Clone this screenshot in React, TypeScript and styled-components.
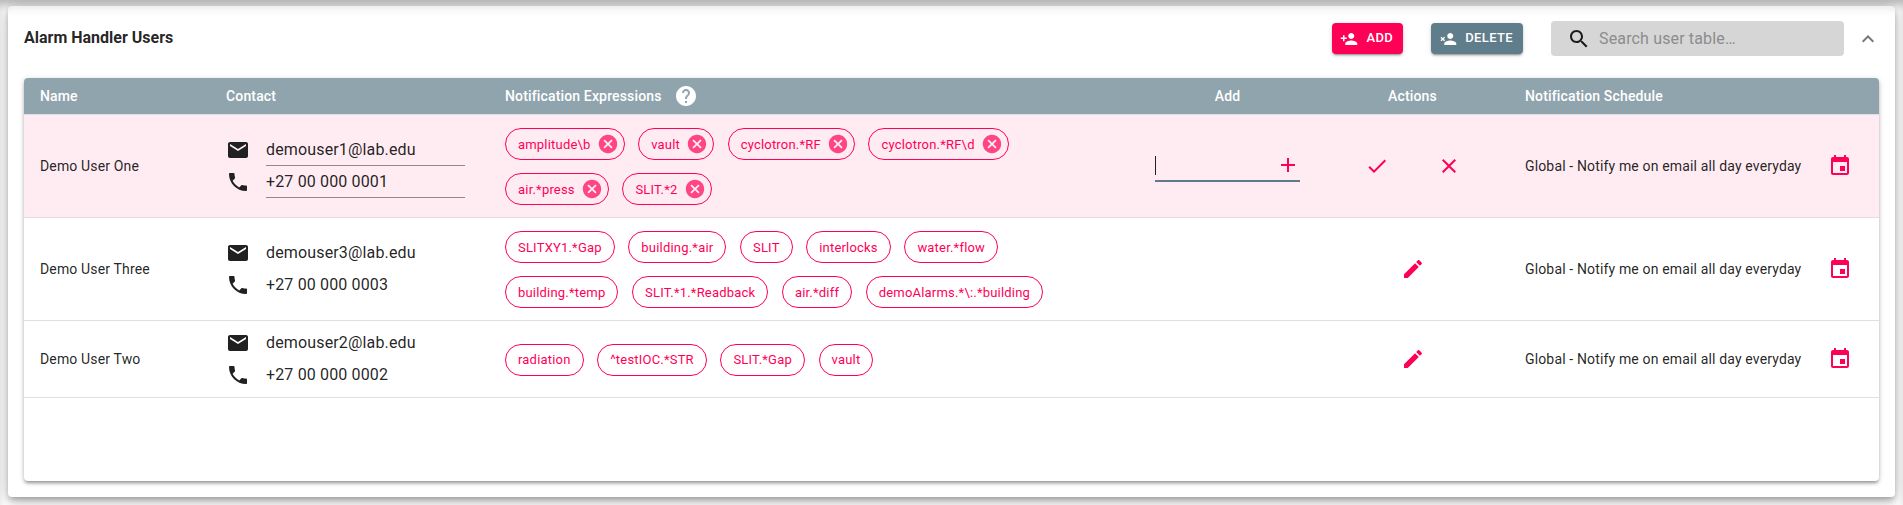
import React from "react";
import styled, { createGlobalStyle } from "styled-components";

const PRIMARY = "#ff0057";

const Global = createGlobalStyle`
  html, body { margin: 0; height: 505px; overflow: hidden; background: #fff; }
  body {
    padding: 6px 8px 8px;
    box-sizing: border-box;
    font-family: Roboto, "Liberation Sans", sans-serif;
    box-shadow: inset 0 8px 8px -3px rgba(0,0,0,.28);
  }
`;

const Paper = styled.section`
  height: 491px;
  box-sizing: border-box;
  background: #fff;
  border-radius: 4px;
  padding: 15px 3px 16px 16px;
  box-shadow: 0 3px 5px -1px rgba(0,0,0,.2), 0 6px 10px 0 rgba(0,0,0,.14), 0 1px 18px 0 rgba(0,0,0,.2),
    inset 0 12px 10px -10px rgba(0,0,0,.1);
`;

const Toolbar = styled.header`
  display: flex;
  align-items: center;
  height: 35px;
  margin-bottom: 22px;
`;

const Title = styled.h1`
  flex: 1;
  margin: 0 0 2px;
  font-size: 16px;
  font-weight: 700;
  color: rgba(0,0,0,.87);
`;

const ActionButton = styled.button<{ $tone: string }>`
  display: inline-flex;
  align-items: center;
  border: 0;
  border-radius: 4px;
  padding: 4px 10px;
  margin-right: 28px;
  background: ${(p) => p.$tone};
  color: #fff;
  font: 500 13px/1.75 Roboto, sans-serif;
  letter-spacing: 0.02857em;
  text-transform: uppercase;
  box-shadow: 0 3px 1px -2px rgba(0,0,0,.2), 0 2px 2px 0 rgba(0,0,0,.14), 0 1px 5px 0 rgba(0,0,0,.12);
  svg { width: 18px; height: 18px; margin: 0 8px 0 -2px; fill: currentColor; }
`;

const SearchBox = styled.div`
  display: flex;
  align-items: center;
  width: 293px;
  height: 35px;
  box-sizing: border-box;
  padding-left: 16px;
  background: #d6d6d6;
  border-radius: 4px;
  svg { width: 24px; height: 24px; fill: rgba(0,0,0,.87); margin-right: 8px; }
`;

const SearchInput = styled.input`
  flex: 1;
  min-width: 0;
  border: 0;
  outline: 0;
  background: none;
  padding: 0;
  font: 400 16px Roboto, sans-serif;
  letter-spacing: 0.00938em;
  &::placeholder { color: #8c8c8c; opacity: 1; }
`;

const Collapse = styled.button`
  width: 48px;
  height: 48px;
  border: 0;
  padding: 12px;
  background: none;
  svg { display: block; width: 24px; height: 24px; fill: rgba(0,0,0,.54); }
`;

const Table = styled.div`
  height: 403px;
  width: 1855px;
  border-radius: 4px;
  overflow: hidden;
  background: #fff;
  box-shadow: 0 3px 3px -1px rgba(0,0,0,.25), 0 2px 4px 0 rgba(0,0,0,.14), 0 1px 6px 0 rgba(0,0,0,.12);
`;

const columns = "186px 279px 650px 177px 193px 370px";

const HeadRow = styled.div`
  display: grid;
  grid-template-columns: ${columns};
  height: 36px;
  align-items: center;
  background: #90a4ae;
  border-bottom: 1px solid #e0e0e0;
  color: #fff;
  font-size: 14px;
  font-weight: 500;
  letter-spacing: 0.01071em;
`;

const HeadCell = styled.div<{ $center?: boolean }>`
  display: flex;
  align-items: center;
  padding: 0 16px;
  justify-content: ${(p) => (p.$center ? "center" : "flex-start")};
  svg { width: 24px; height: 24px; fill: #fff; margin-left: 12px; }
`;

const Row = styled.div<{ $editing?: boolean }>`
  display: grid;
  grid-template-columns: ${columns};
  align-items: center;
  border-bottom: 1px solid #e0e0e0;
  background: ${(p) => (p.$editing ? "#ffebf2" : "#fff")};
  color: rgba(0,0,0,.87);
  font-size: 14px;
  letter-spacing: 0.01071em;
`;

const Cell = styled.div`
  padding: 0 16px;
`;

const ContactCell = styled.div`
  padding: 6px 16px;
`;

const ContactLine = styled.div`
  display: flex;
  align-items: center;
  height: 32px;
  svg { flex: none; width: 24px; height: 24px; fill: #212121; margin-right: 16px; }
`;

const ContactText = styled.div<{ $editing?: boolean }>`
  width: 199px;
  height: 32px;
  box-sizing: border-box;
  line-height: 31px;
  font-size: 16px;
  letter-spacing: 0.00938em;
  border-bottom: 1px solid ${(p) => (p.$editing ? "rgba(0,0,0,.42)" : "transparent")};
`;

const ChipCell = styled.div`
  display: flex;
  flex-wrap: wrap;
  gap: 13px 13.6px;
  padding: 13px 20px 12px 16px;
`;

const Chip = styled.span`
  display: inline-flex;
  align-items: center;
  height: 32px;
  box-sizing: border-box;
  border: 1px solid ${PRIMARY};
  border-radius: 16px;
  padding: 0 12px;
  color: ${PRIMARY};
  font-size: 13px;
  letter-spacing: 0.2px;
  white-space: nowrap;
`;

const ChipDelete = styled.svg`
  width: 22px;
  height: 22px;
  margin: 0 -7px 0 6px;
  fill: ${PRIMARY};
  opacity: .7;
`;

const AddCell = styled.div`
  padding: 0 16px;
`;

const AddField = styled.div`
  display: flex;
  align-items: center;
  justify-content: space-between;
  height: 32px;
  box-sizing: border-box;
  border-bottom: 2px solid #5f7a8b;
  padding-bottom: 0;
  svg { width: 24px; height: 24px; fill: ${PRIMARY}; }
`;

const Caret = styled.span`
  width: 1px;
  height: 19px;
  background: #212121;
`;

const ActionsCell = styled.div`
  display: flex;
  justify-content: center;
  gap: 48px;
  padding: 0 16px;
  svg { display: block; width: 24px; height: 24px; fill: ${PRIMARY}; }
`;

const ScheduleCell = styled.div`
  display: flex;
  align-items: center;
  justify-content: space-between;
  padding: 0 27px 0 16px;
  svg { width: 24px; height: 24px; fill: ${PRIMARY}; }
`;

const icons = {
  mail: "M20 4H4c-1.1 0-1.99.9-1.99 2L2 18c0 1.1.9 2 2 2h16c1.1 0 2-.9 2-2V6c0-1.1-.9-2-2-2zm0 4l-8 5-8-5V6l8 5 8-5v2z",
  phone: "M6.62 10.79c1.44 2.83 3.76 5.14 6.59 6.59l2.2-2.2c.27-.27.67-.36 1.02-.24 1.12.37 2.33.57 3.57.57.55 0 1 .45 1 1V20c0 .55-.45 1-1 1-9.39 0-17-7.61-17-17 0-.55.45-1 1-1h3.5c.55 0 1 .45 1 1 0 1.25.2 2.45.57 3.57.11.35.03.74-.25 1.02l-2.2 2.2z",
  search: "M15.5 14h-.79l-.28-.27C15.41 12.59 16 11.11 16 9.5 16 5.91 13.09 3 9.5 3S3 5.91 3 9.5 5.91 16 9.5 16c1.61 0 3.09-.59 4.23-1.57l.27.28v.79l5 4.99L20.49 19l-4.99-5zm-6 0C7.01 14 5 11.99 5 9.5S7.01 5 9.5 5 14 7.01 14 9.5 11.99 14 9.5 14z",
  less: "M12 8l-6 6 1.41 1.41L12 10.83l4.59 4.58L18 14z",
  help: "M12 2C6.48 2 2 6.48 2 12s4.48 10 10 10 10-4.48 10-10S17.52 2 12 2zm1 17h-2v-2h2v2zm2.07-7.75l-.9.92C13.45 12.9 13 13.5 13 15h-2v-.5c0-1.1.45-2.1 1.17-2.83l1.24-1.26c.37-.36.59-.86.59-1.41 0-1.1-.9-2-2-2s-2 .9-2 2H8c0-2.21 1.79-4 4-4s4 1.79 4 4c0 .88-.36 1.68-.93 2.25z",
  personAdd: "M15 12c2.21 0 4-1.79 4-4s-1.79-4-4-4-4 1.79-4 4 1.79 4 4 4zm-9-2V7H4v3H1v2h3v3h2v-3h3v-2H6zm9 4c-2.67 0-8 1.34-8 4v2h16v-2c0-2.66-5.33-4-8-4z",
  personRemove: "M15 12c2.21 0 4-1.79 4-4s-1.79-4-4-4-4 1.79-4 4 1.79 4 4 4zm0 2c-2.67 0-8 1.34-8 4v2h16v-2c0-2.66-5.33-4-8-4zM3.2 8.9L1.9 10.2 3.7 12 1.9 13.8l1.3 1.3L5 13.3l1.8 1.8 1.3-1.3L6.3 12l1.8-1.8-1.3-1.3L5 10.7z",
  cancel: "M12 2C6.47 2 2 6.47 2 12s4.47 10 10 10 10-4.47 10-10S17.53 2 12 2zm5 13.59L15.59 17 12 13.41 8.41 17 7 15.59 10.59 12 7 8.41 8.41 7 12 10.59 15.59 7 17 8.41 13.41 12 17 15.59z",
  add: "M19 13h-6v6h-2v-6H5v-2h6V5h2v6h6v2z",
  check: "M9 16.17L4.83 12l-1.42 1.41L9 19 21 7l-1.41-1.41z",
  clear: "M19 6.41L17.59 5 12 10.59 6.41 5 5 6.41 10.59 12 5 17.59 6.41 19 12 13.41 17.59 19 19 17.59 13.41 12z",
  edit: "M3 17.25V21h3.75L17.81 9.94l-3.75-3.75L3 17.25zM20.71 7.04c.39-.39.39-1.02 0-1.41l-2.34-2.34c-.39-.39-1.02-.39-1.41 0l-1.83 1.83 3.75 3.75 1.83-1.83z",
  event: "M17 12h-5v5h5v-5zM16 1v2H8V1H6v2H5c-1.11 0-1.99.9-1.99 2L3 19c0 1.1.89 2 2 2h14c1.1 0 2-.9 2-2V5c0-1.1-.9-2-2-2h-1V1h-2zm3 18H5V8h14v11z",
};

const Icon = ({ d }: { d: string }) => (
  <svg viewBox="0 0 24 24" aria-hidden="true">
    <path d={d} />
  </svg>
);

const users = [
  {
    name: "Demo User One",
    email: "demouser1@lab.edu",
    phone: "+27 00 000 0001",
    editing: true,
    chips: ["amplitude\\b", "vault", "cyclotron.*RF", "cyclotron.*RF\\d", "air.*press", "SLIT.*2"],
  },
  {
    name: "Demo User Three",
    email: "demouser3@lab.edu",
    phone: "+27 00 000 0003",
    editing: false,
    chips: ["SLITXY1.*Gap", "building.*air", "SLIT", "interlocks", "water.*flow", "building.*temp", "SLIT.*1.*Readback", "air.*diff", "demoAlarms.*\\:.*building"],
  },
  {
    name: "Demo User Two",
    email: "demouser2@lab.edu",
    phone: "+27 00 000 0002",
    editing: false,
    chips: ["radiation", "^testIOC.*STR", "SLIT.*Gap", "vault"],
  },
];

export default function App() {
  return (
    <>
      <Global />
      <Paper>
        <Toolbar>
          <Title>Alarm Handler Users</Title>
          <ActionButton $tone={PRIMARY}>
            <Icon d={icons.personAdd} />
            Add
          </ActionButton>
          <ActionButton $tone="#607d8b">
            <Icon d={icons.personRemove} />
            Delete
          </ActionButton>
          <SearchBox>
            <Icon d={icons.search} />
            <SearchInput placeholder="Search user table…" />
          </SearchBox>
          <Collapse aria-label="Collapse">
            <Icon d={icons.less} />
          </Collapse>
        </Toolbar>
        <Table>
          <HeadRow>
            <HeadCell>Name</HeadCell>
            <HeadCell>Contact</HeadCell>
            <HeadCell>
              Notification Expressions
              <Icon d={icons.help} />
            </HeadCell>
            <HeadCell $center>Add</HeadCell>
            <HeadCell $center>Actions</HeadCell>
            <HeadCell>Notification Schedule</HeadCell>
          </HeadRow>
          {users.map((u) => (
            <Row key={u.name} $editing={u.editing}>
              <Cell>{u.name}</Cell>
              <ContactCell>
                <ContactLine>
                  <Icon d={icons.mail} />
                  <ContactText $editing={u.editing}>{u.email}</ContactText>
                </ContactLine>
                <ContactLine>
                  <Icon d={icons.phone} />
                  <ContactText $editing={u.editing}>{u.phone}</ContactText>
                </ContactLine>
              </ContactCell>
              <ChipCell>
                {u.chips.map((c) => (
                  <Chip key={c}>
                    {c}
                    {u.editing && (
                      <ChipDelete viewBox="0 0 24 24" aria-hidden="true">
                        <path d={icons.cancel} />
                      </ChipDelete>
                    )}
                  </Chip>
                ))}
              </ChipCell>
              <AddCell>
                {u.editing && (
                  <AddField>
                    <Caret />
                    <Icon d={icons.add} />
                  </AddField>
                )}
              </AddCell>
              <ActionsCell>
                {u.editing ? (
                  <>
                    <Icon d={icons.check} />
                    <Icon d={icons.clear} />
                  </>
                ) : (
                  <Icon d={icons.edit} />
                )}
              </ActionsCell>
              <ScheduleCell>
                Global - Notify me on email all day everyday
                <Icon d={icons.event} />
              </ScheduleCell>
            </Row>
          ))}
        </Table>
      </Paper>
    </>
  );
}
